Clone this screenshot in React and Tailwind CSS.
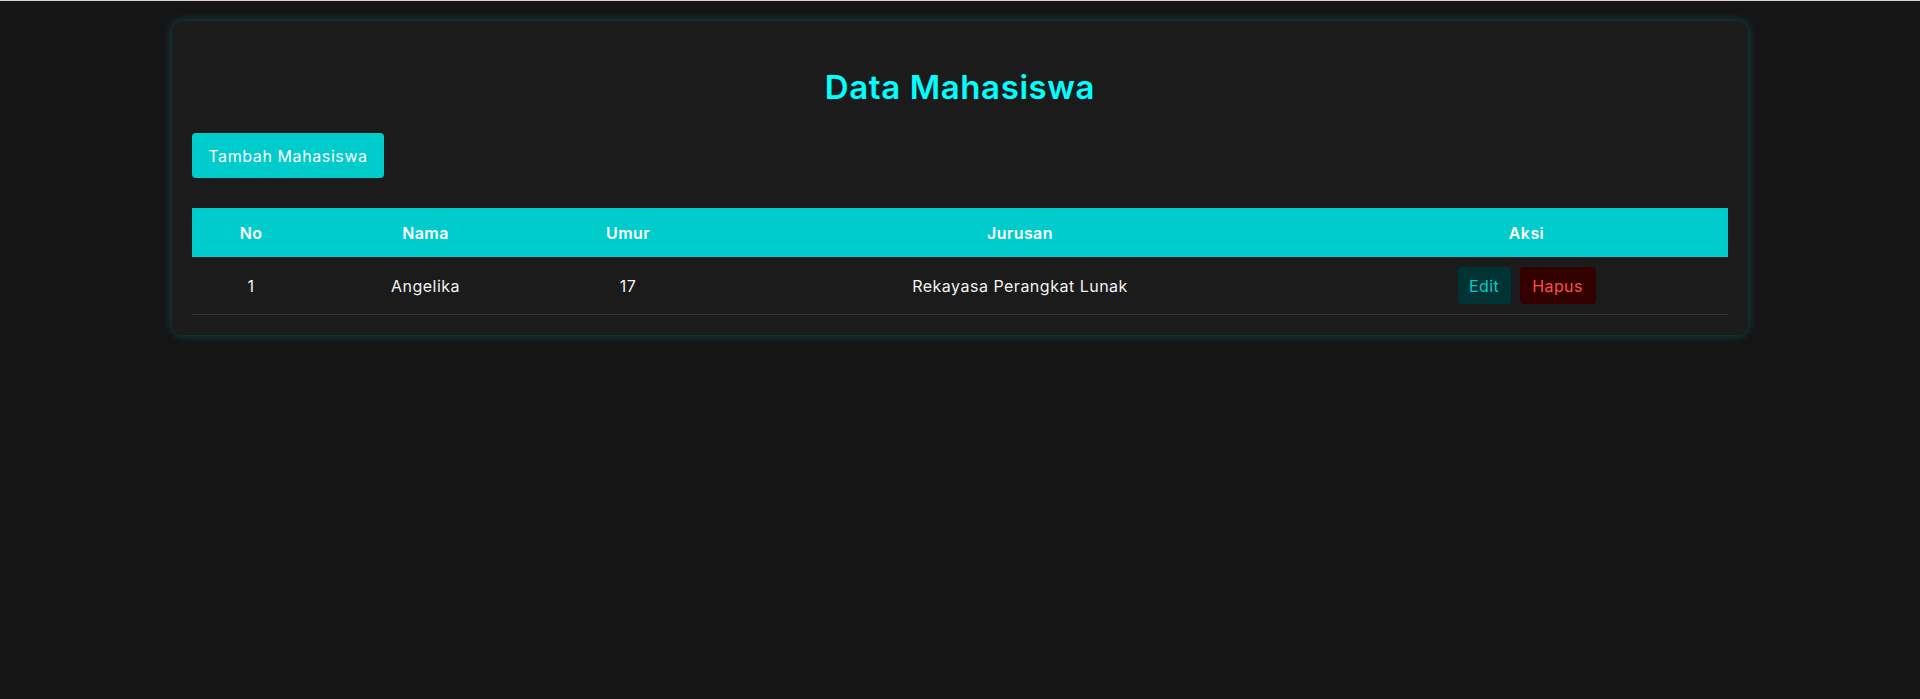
export default function App() {
  const font = { fontFamily: '"Inter", "Open Sans", sans-serif' };
  return (
    <div className="min-h-[699px] bg-[#151515]" style={font}>
      <div className="h-px bg-[#d4d4d4]" />
      <div className="mx-auto mt-5 w-[1576px] rounded-[10px] bg-[#1b1b1b] p-5 shadow-[0_0_10px_rgba(0,204,204,0.3)]">
        <h2 className="mt-[22px] text-center text-[33px] leading-[48px] font-semibold tracking-[0.6px] text-[#00ffff]">
          Data Mahasiswa
        </h2>
        <div className="mt-[22px] flex">
          <button className="flex h-[45px] w-[192px] items-center justify-center rounded-[4px] bg-[#00cccc] text-[16px] tracking-[0.6px] text-white">
            Tambah Mahasiswa
          </button>
        </div>
        <div className="mt-[30px]">
          <div className="grid h-[49px] grid-cols-[118px_231px_174px_610px_1fr] items-center bg-[#00cccc] text-[16px] font-semibold tracking-[0.4px] text-white">
            <div className="text-center">No</div>
            <div className="text-center">Nama</div>
            <div className="text-center">Umur</div>
            <div className="text-center">Jurusan</div>
            <div className="text-center">Aksi</div>
          </div>
          <div className="grid h-[58px] grid-cols-[118px_231px_174px_610px_1fr] items-center border-b border-[#333333] text-[16px] tracking-[0.5px] text-[#f2f2f2]">
            <div className="text-center">1</div>
            <div className="text-center">Angelika</div>
            <div className="text-center">17</div>
            <div className="text-center">Rekayasa Perangkat Lunak</div>
            <div className="flex items-center justify-center gap-[9px]">
              <button className="flex h-[37px] w-[53px] items-center justify-center rounded-[4px] bg-[#003333] text-[16px] tracking-[0.4px] text-[#00cccc]">
                Edit
              </button>
              <button className="flex h-[37px] w-[76px] items-center justify-center rounded-[4px] bg-[#330000] text-[16px] tracking-[0.4px] text-[#ff4d4d]">
                Hapus
              </button>
            </div>
          </div>
        </div>
      </div>
    </div>
  );
}
